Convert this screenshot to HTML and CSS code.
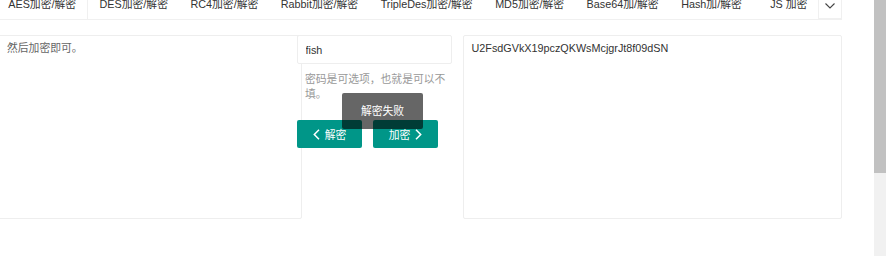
FILE: index.html
```html
<!DOCTYPE html>
<html lang="zh-CN">

<head>
    <meta charset="UTF-8">
    <meta name="viewport" content="width=device-width, initial-scale=1.0">
    <title>在线加密解密</title>
    <link rel="stylesheet" href="styles.css">
</head>

<body>
    <div class="screen">
        <div class="page">
            <div class="tab">
                <ul class="tab-title">
                    <li class="this">AES加密/解密</li>
                    <li>DES加密/解密</li>
                    <li>RC4加密/解密</li>
                    <li>Rabbit加密/解密</li>
                    <li>TripleDes加密/解密</li>
                    <li>MD5加密/解密</li>
                    <li>Base64加/解密</li>
                    <li>Hash加/解密</li>
                    <li>JS 加密</li>
                    <li>URL编码</li>
                </ul>
                <span class="tab-bar">
                    <svg width="10" height="6" viewBox="0 0 10 6">
                        <path d="M0.5 0.5 L5 5 L9.5 0.5" fill="none" stroke="#444" stroke-width="1.1" />
                    </svg>
                </span>
            </div>

            <div class="tab-content">
                <textarea class="area area-src" spellcheck="false">然后加密即可。</textarea>

                <div class="mid">
                    <input class="key" type="text" value="fish">
                    <div class="hint">密码是可选项，也就是可以不填。</div>
                    <div class="btns">
                        <button class="btn">
                            <svg width="7" height="11" viewBox="0 0 7 11">
                                <path d="M6 0.8 L1.3 5.5 L6 10.2" fill="none" stroke="#fff" stroke-width="1.5" />
                            </svg>
                            解密
                        </button>
                        <button class="btn">
                            加密
                            <svg width="7" height="11" viewBox="0 0 7 11">
                                <path d="M1 0.8 L5.7 5.5 L1 10.2" fill="none" stroke="#fff" stroke-width="1.5" />
                            </svg>
                        </button>
                    </div>
                    <div class="msg">解密失败</div>
                </div>

                <textarea class="area area-out" spellcheck="false">U2FsdGVkX19pczQKWsMcjgrJt8f09dSN</textarea>
            </div>
        </div>

        <div class="scrollbar">
            <div class="thumb"></div>
        </div>
    </div>
</body>

</html>
```

FILE: styles.css
```css
html,
body {
    margin: 0;
    padding: 0;
    background: #fff;
}

body {
    font-family: "Liberation Sans", "Noto Sans CJK SC", sans-serif;
    font-size: 10.8px;
    color: #333;
}

.screen {
    display: flex;
    height: 256px;
    overflow: hidden;
}

.page {
    width: 846px;
    margin-left: -4px;
    flex-shrink: 0;
}

/* tabs */
.tab {
    position: relative;
    margin-top: -11px;
}

.tab-title {
    display: flex;
    margin: 0;
    padding: 0;
    list-style: none;
    height: 30px;
    border-bottom: 1px solid #f0f0f0;
    overflow: hidden;
    white-space: nowrap;
}

.tab-title li {
    flex-shrink: 0;
    min-width: 49px;
    padding: 0 11.25px;
    line-height: 30px;
    text-align: center;
    color: #333;
}

.tab-title li.this {
    border-left: 1px solid #f0f0f0;
    border-right: 1px solid #f0f0f0;
}

.tab-bar {
    position: absolute;
    right: 0;
    top: 0;
    width: 22px;
    height: 29px;
    border: 1px solid #f0f0f0;
    border-top: none;
    background: #fff;
    display: flex;
    align-items: flex-end;
    justify-content: center;
}

.tab-bar svg {
    margin-bottom: 9px;
}

/* content */
.tab-content {
    display: flex;
    align-items: flex-start;
    padding-top: 15px;
}

.area {
    box-sizing: border-box;
    height: 184px;
    margin: 0;
    padding: 4.5px 7.5px;
    border: 1px solid #eeeeee;
    border-radius: 2px;
    font-family: inherit;
    font-size: 10.8px;
    line-height: 15px;
    resize: none;
    outline: none;
    background: #fff;
}

.area-src {
    width: 306px;
    padding-left: 10px;
    color: #666;
}

.area-out {
    width: 379px;
    margin-left: 11px;
    color: #333;
}

.mid {
    position: relative;
    z-index: 1;
    width: 155px;
    margin-left: -5px;
}

.key {
    display: block;
    box-sizing: border-box;
    width: 100%;
    height: 29px;
    margin: 0;
    padding: 0 7.5px;
    border: 1px solid #eeeeee;
    border-radius: 2px;
    font-family: inherit;
    font-size: 10.8px;
    color: #333;
    background: #fff;
    outline: none;
}

.hint {
    padding: 7.5px 4px 0 8px;
    line-height: 15.5px;
    color: #999;
}

.btns {
    display: flex;
    gap: 11px;
    margin-top: 17.5px;
}

.btn {
    display: flex;
    align-items: center;
    justify-content: center;
    gap: 5px;
    width: 65px;
    height: 28px;
    padding: 0;
    border: none;
    border-radius: 2px;
    background: #009688;
    color: #fff;
    font-family: inherit;
    font-size: 10.8px;
    cursor: pointer;
}

.msg {
    position: absolute;
    left: 45px;
    top: 58px;
    width: 81px;
    height: 36px;
    line-height: 36px;
    text-align: center;
    border-radius: 2px;
    background: rgba(0, 0, 0, 0.6);
    color: #fff;
}

/* page scrollbar */
.scrollbar {
    width: 12px;
    margin-left: auto;
    background: #f1f1f1;
}

.thumb {
    height: 173px;
    background: #c1c1c1;
}
```
